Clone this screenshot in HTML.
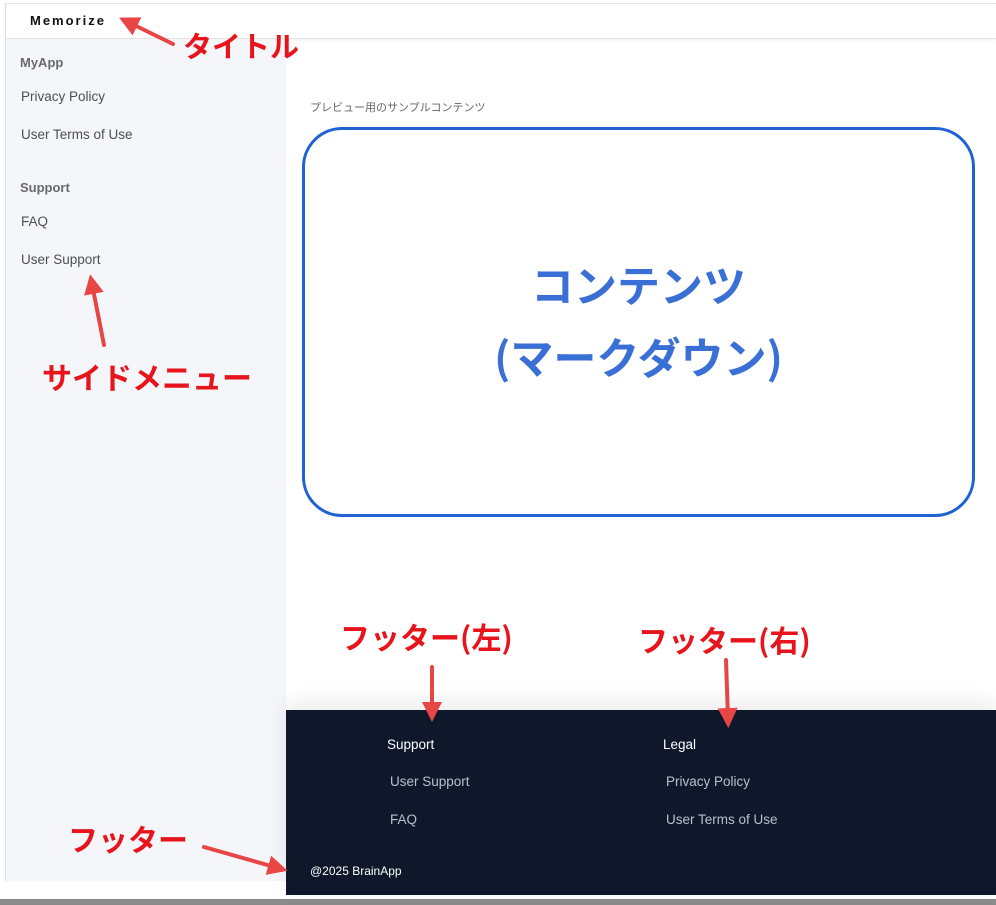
<!DOCTYPE html>
<html><head><meta charset="utf-8"><style>
*{margin:0;padding:0;box-sizing:border-box}
body{width:996px;height:905px;background:#fff;position:relative;overflow:hidden;font-family:"Liberation Sans","Noto Sans CJK JP",sans-serif}
.abs{position:absolute}
.hdr{left:5px;top:3px;width:991px;height:36px;border-top:1px solid #e3e3e3;border-left:1px solid #ddd;border-bottom:1px solid #e3e3e3;box-shadow:0 1px 3px rgba(0,0,0,.06);background:#fff}
.side{left:5px;top:39px;width:281px;height:842px;background:#f5f6fa;border-left:1px solid #dcdde3}
.side .h{position:absolute;left:14px;font-size:13px;font-weight:bold;color:#666a72}
.side .l{position:absolute;left:15px;font-size:13.5px;color:#4a4e57}
.foot{left:286px;top:710px;width:710px;height:185px;background:#0f172a;box-shadow:0 -8px 20px rgba(0,0,0,.08)}
.foot div{position:absolute;font-size:13.5px}
.red{color:#e8141c;font-weight:bold;font-size:30px;font-family:"Noto Sans CJK JP",sans-serif;white-space:nowrap}
</style></head><body>
<div class="abs hdr"><span class="abs" style="left:24px;top:9px;font-size:13px;font-weight:bold;letter-spacing:2px;color:#111">Memorize</span></div>
<div class="abs side">
<div class="h" style="top:16px">MyApp</div>
<div class="l" style="top:50px">Privacy Policy</div>
<div class="l" style="top:88px">User Terms of Use</div>
<div class="h" style="top:141px">Support</div>
<div class="l" style="top:175px">FAQ</div>
<div class="l" style="top:213px">User Support</div>
</div>
<div class="abs" style="left:310px;top:99px;font-size:11px;color:#666">プレビュー用のサンプルコンテンツ</div>
<div class="abs" style="left:302px;top:127px;width:673px;height:390px;border:3px solid #1f62d4;border-radius:40px"></div>
<div class="abs" style="left:302px;top:248px;width:673px;text-align:center;color:#3a6fd6;font-size:43px;font-weight:bold;line-height:72px;font-family:'Noto Sans CJK JP',sans-serif">コンテンツ<br>(マークダウン)</div>
<div class="abs foot">
<div style="left:101px;top:27px;color:#fff">Support</div>
<div style="left:104px;top:64px;color:#b9c0cc">User Support</div>
<div style="left:104px;top:102px;color:#b9c0cc">FAQ</div>
<div style="left:377px;top:27px;color:#fff">Legal</div>
<div style="left:380px;top:64px;color:#b9c0cc">Privacy Policy</div>
<div style="left:380px;top:102px;color:#b9c0cc">User Terms of Use</div>
<div style="left:24px;top:154px;color:#fff;font-size:12px">@2025 BrainApp</div>
</div>
<div class="abs" style="left:0;top:899px;width:996px;height:6px;background:#8a8a8a"></div>
<div class="abs red" style="left:183px;top:24px;font-size:29px">タイトル</div>
<div class="abs red" style="left:42px;top:354px">サイドメニュー</div>
<div class="abs red" style="left:340px;top:614px">フッター(左)</div>
<div class="abs red" style="left:638px;top:617px">フッター(右)</div>
<div class="abs red" style="left:68px;top:816px">フッター</div>
<svg class="abs" style="left:0;top:0" width="996" height="905">
<defs><marker id="a" markerWidth="5" markerHeight="5" refX="2.5" refY="2.5" orient="auto"><path d="M0,0 L5,2.5 L0,5 z" fill="#e84545"/></marker></defs>
<g stroke="#e84545" stroke-width="4" stroke-linecap="round" fill="none">
<line x1="173" y1="44" x2="128" y2="22" marker-end="url(#a)"/>
<line x1="104" y1="345" x2="92" y2="284" marker-end="url(#a)"/>
<line x1="432" y1="667" x2="432" y2="712" marker-end="url(#a)"/>
<line x1="726" y1="660" x2="728" y2="718" marker-end="url(#a)"/>
<line x1="204" y1="847" x2="278" y2="868" marker-end="url(#a)"/>
</g></svg>
</body></html>
